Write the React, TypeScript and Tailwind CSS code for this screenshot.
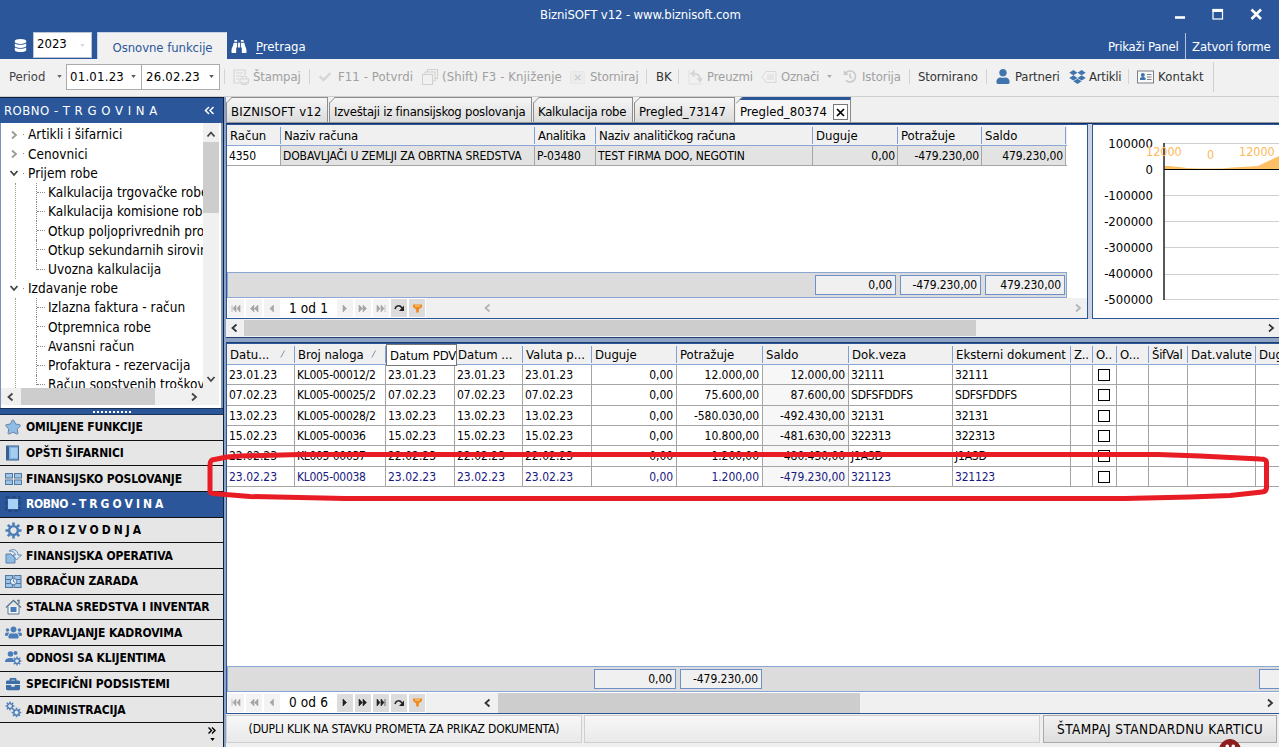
import React from 'react';
import clsx from 'clsx';
import { FaBinoculars, FaBriefcase, FaCheck, FaDatabase, FaDropbox, FaHistory, FaStar, FaUser, FaUsers } from 'react-icons/fa';

type Align = 'left' | 'right' | 'check';

interface Column {
  title: string;
  width: string;
  align?: Align;
  sorted?: boolean;
  boxed?: boolean;
  track?: string;
}

const Chevron: React.FC<{ dir: 'left' | 'right' | 'up' | 'down'; className?: string }> = ({ dir, className }) => {
  const d = {
    left: 'M6.5 1.5 L2.5 5 L6.5 8.5',
    right: 'M3 1.5 L7 5 L3 8.5',
    up: 'M1.5 6.5 L5 2.5 L8.5 6.5',
    down: 'M1.5 3 L5 7 L8.5 3',
  }[dir];
  return (
    <svg viewBox="0 0 10 10" className={clsx('h-[10px] w-[10px] shrink-0', className)} fill="none" stroke="currentColor" strokeWidth="1.8">
      <path d={d} />
    </svg>
  );
};

const Caret: React.FC<{ className?: string }> = ({ className }) => (
  <svg viewBox="0 0 6 4" className={clsx('h-[3px] w-[5px] shrink-0', className)} fill="currentColor">
    <path d="M0 0 H6 L3 4 Z" />
  </svg>
);

/* ---------- Title bar ---------- */

const TitleBar: React.FC = () => (
  <header className="relative flex h-[59px] flex-col bg-[#2b579a] text-white">
    <div className="flex h-[32px] items-center">
      <span className="ml-[540px] w-[602px] pb-[2px] text-[13px] tracking-[-0.12px] whitespace-nowrap">BizniSOFT v12 - www.biznisoft.com</span>
      <svg width="96" height="16" viewBox="0 0 96 16" className="ml-[33px]" fill="none" stroke="#fff">
        <path d="M0 9.5 H10" strokeWidth="2.6" />
        <rect x="38" y="1.5" width="9.5" height="9.5" strokeWidth="1.2" />
        <path d="M37.5 2.5 H48" strokeWidth="3" />
        <path d="M76.5 1.5 L86 11 M86 1.5 L76.5 11" strokeWidth="2.6" />
      </svg>
    </div>
    <div className="flex h-[27px] items-end text-[13px]">
      <FaDatabase className="mb-[7px] ml-[14px] h-[13px] w-[13px]" />
      <div className="mb-px ml-[6px] flex h-[26px] w-[59px] justify-between border border-[#b9c4d6] bg-white pt-[1px] pl-[3px] text-black">
        <span className="leading-[20px]">2023</span>
        <Caret className="mt-[10px] mr-[6px] text-[#d8d8d8]" />
      </div>
      <div className="ml-[5px] flex h-[27px] w-[130px] items-center justify-center border-t border-l border-[#c6d2e6] bg-[#f1f1f1] pt-[4px] tracking-[-0.06px] whitespace-nowrap text-[#2b579a]">
        Osnovne funkcije
      </div>
      <FaBinoculars className="mb-[5px] ml-[4px] h-[15px] w-[16px]" />
      <span className="mb-[2px] ml-[9px] w-[852px] leading-[20px]">
        <u className="underline-offset-2">P</u>retraga
      </span>
      <span className="mb-[2px] w-[77px] leading-[20px] tracking-[-0.2px] whitespace-nowrap">Prikaži Panel</span>
      <span className="flex h-[26px] items-center border-l border-[#b5c4dc] pt-[2px] pl-[6px] tracking-[-0.12px] whitespace-nowrap">
        Zatvori forme
      </span>
    </div>
  </header>
);

/* ---------- Toolbar ---------- */

const Sep: React.FC<{ className: string }> = ({ className }) => <span className={clsx('h-[15px] shrink-0 border-l border-[#d4d4d4]', className)} />;

const Tool: React.FC<{ className: string; children: React.ReactNode }> = ({ className, children }) => (
  <span className={clsx('shrink-0 whitespace-nowrap', className)}>{children}</span>
);

const PrintIcon = () => (
  <svg width="16" height="16" viewBox="0 0 16 16" fill="none" stroke="#d6d6d6" strokeWidth="1.2" className="mr-[4px] shrink-0">
    <path d="M6 14 H1 V1 H12 V6 M3 4 H10 M3 7 H9 M3 10 H6" />
    <path d="M7 10 H15.4 V14 H7 Z M9 10 V7.5 H13.5 V10 M9 13 V15.5 H13.5 V13" />
  </svg>
);

const CopiesIcon = () => (
  <svg width="16" height="16" viewBox="0 0 16 16" fill="#f1f1f1" stroke="#d0d0d0" className="mr-[4px] shrink-0">
    <rect x="5.5" y=".5" width="10" height="9" />
    <rect x="3" y="3" width="10" height="9" />
    <rect x=".5" y="5.5" width="10" height="10" />
  </svg>
);

const StornoIcon = () => (
  <svg width="16" height="16" viewBox="0 0 16 16" fill="none" className="mr-[4px] shrink-0">
    <rect x=".5" y="2.5" width="14" height="12" fill="#ececec" stroke="#e8e8e8" />
    <path d="M5 6 L10.5 11 M10.5 6 L5 11" stroke="#cdcdcd" strokeWidth="1.3" />
  </svg>
);

const FetchIcon = () => (
  <svg width="15" height="16" viewBox="0 0 15 16" fill="none" stroke="#d6d6d6" strokeWidth="2" className="mr-[4px] shrink-0">
    <path d="M1 1 V15 H15" strokeWidth="1" stroke="#e0e0e0" />
    <path d="M5 4.5 C9 4.5 12 6 12 10" />
    <path d="M2 4.5 L6.5 .5 V8.5 Z M8.5 9 H15 L12 14 Z" fill="#d6d6d6" stroke="none" />
  </svg>
);

const TagIcon = () => (
  <svg width="16" height="14" viewBox="0 0 16 14" fill="none" stroke="#d9d9d9" className="mr-[4px] shrink-0">
    <path d="M5 1.5 H15 V12.5 H5 L1 7 Z M6 5 H13 M6 7 H13 M6 9 H13" />
  </svg>
);

const ContactIcon = () => (
  <svg width="17" height="14" viewBox="0 0 17 14" className="mr-[4px] shrink-0">
    <rect x=".5" y="1" width="16" height="12" fill="#f8f8f8" stroke="#7b7f85" />
    <path d="M3 10 V8 L5 7 H7 L8.5 8 V10 Z" fill="#3f74ac" />
    <circle cx="5.8" cy="5" r="2" fill="#3f74ac" />
    <path d="M10 4.5 H14.5 M10 7 H14.5 M10 9.5 H14.5" stroke="#7b7f85" />
  </svg>
);

const DateBox: React.FC<{ value: string; className: string }> = ({ value, className }) => (
  <div className={clsx('flex h-[26px] shrink-0 items-center justify-between border border-[#ababab] bg-white text-black', className)}>
    <span className="tracking-[0.25px]">{value}</span>
    <Caret className="mr-[5px] text-[#555]" />
  </div>
);

const Toolbar: React.FC = () => (
  <div className="flex h-[38px] items-center border-b border-[#cfcfcf] bg-[#f1f1f1] pb-[2px] text-[13px] tracking-[-0.12px] text-[#333]">
    <Tool className="ml-[9px] w-[48px] tracking-normal text-[#444]">Period</Tool>
    <Caret className="mr-[4px] text-[#666]" />
    <DateBox value="01.01.23" className="w-[76px] pl-[3px]" />
    <DateBox value="26.02.23" className="w-[78px] border-l-0 pl-[4px]" />
    <Sep className="mr-[8px] ml-[4px]" />
    <PrintIcon />
    <Tool className="w-[56px] text-[#a0a0a0]">Štampaj</Tool>
    <Sep className="mr-[8px]" />
    <FaCheck className="mr-[6px] h-[12px] w-[14px] shrink-0 text-[#d6d6d6]" />
    <Tool className="w-[84px] tracking-[0.1px] text-[#a0a0a0]">F11 - Potvrdi</Tool>
    <CopiesIcon />
    <Tool className="w-[128px] tracking-[0.08px] text-[#a0a0a0]">(Shift) F3 - Knjiženje</Tool>
    <StornoIcon />
    <Tool className="w-[56px] text-[#a0a0a0]">Storniraj</Tool>
    <Sep className="mr-[9px]" />
    <Tool className="w-[22px]">BK</Tool>
    <Sep className="mr-[9px]" />
    <FetchIcon />
    <Tool className="w-[54px] text-[#a0a0a0]">Preuzmi</Tool>
    <TagIcon />
    <Tool className="w-[46px] tracking-[-0.25px] text-[#a0a0a0]">Označi</Tool>
    <Caret className="mr-[11px] text-[#aaa]" />
    <FaHistory className="mr-[5px] h-[13px] w-[14px] shrink-0 text-[#c9c9c9]" />
    <Tool className="w-[47px] text-[#a0a0a0]">Istorija</Tool>
    <Sep className="mr-[8px]" />
    <Tool className="w-[68px]">Stornirano</Tool>
    <Sep className="mr-[9px]" />
    <FaUser className="mr-[5px] h-[15px] w-[14px] shrink-0 text-[#3f74ac]" />
    <Tool className="w-[54px]">Partneri</Tool>
    <FaDropbox className="mr-[3px] h-[16px] w-[17px] shrink-0 text-[#3f74ac]" />
    <Tool className="w-[39px] tracking-[-0.25px]">Artikli</Tool>
    <Sep className="mr-[8px]" />
    <ContactIcon />
    <Tool className="w-[55px] tracking-[0.15px]">Kontakt</Tool>
    <span className="h-[30px] border-l border-[#d0d0d0]" />
  </div>
);

/* ---------- Left panel ---------- */

interface TreeNode {
  label: string;
  open?: boolean;
  children?: string[];
}

const tree: TreeNode[] = [
  { label: 'Artikli i šifarnici' },
  { label: 'Cenovnici' },
  {
    label: 'Prijem robe',
    open: true,
    children: ['Kalkulacija trgovačke robe', 'Kalkulacija komisione robe', 'Otkup poljoprivrednih pro', 'Otkup sekundarnih sirovina', 'Uvozna kalkulacija'],
  },
  {
    label: 'Izdavanje robe',
    open: true,
    children: ['Izlazna faktura - račun', 'Otpremnica robe', 'Avansni račun', 'Profaktura - rezervacija', 'Račun sopstvenih troškov'],
  },
];

const Tree: React.FC = () => (
  <div className="flex h-[285px] flex-col border-r-2 border-l border-[#7b93b8] bg-white">
    <div className="flex h-[265px]">
      <div className="w-[202px] shrink-0 overflow-hidden pt-[2px] text-[13.5px] tracking-[0.04px] whitespace-nowrap text-black">
        {tree.map((node) => (
          <div key={node.label}>
            <div className="flex h-[19.22px] items-center">
              <Chevron dir={node.open ? 'down' : 'right'} className={clsx('ml-[8px]', node.open ? 'text-[#444]' : 'text-[#9a9a9a]')} />
              <span className="mr-[4px] ml-[4px] w-px border-t border-[#888]" />
              <span>{node.label}</span>
            </div>
            {node.children && (
              <div className="ml-[14px] border-l border-dotted border-[#999] pl-[20px]">
                {node.children.map((child, i) => (
                  <div key={child} className="flex h-[19.22px] items-center">
                    <span className={clsx('shrink-0 self-start border-l border-dotted border-[#888]', i === 4 ? 'h-[10px]' : 'h-full')} />
                    <span className="mr-[3px] w-[8px] shrink-0 border-t border-dotted border-[#888]" />
                    <span className="shrink-0">{child}</span>
                  </div>
                ))}
              </div>
            )}
          </div>
        ))}
      </div>
      <div className="flex w-[16px] flex-col items-center bg-[#f0f0f0]">
        <Chevron dir="up" className="mt-[7px] mb-[2px] text-[#444]" />
        <div className="h-[71px] w-full bg-[#cdcdcd]" />
        <Chevron dir="down" className="mt-auto mb-[4px] text-[#444]" />
      </div>
    </div>
    <div className="flex h-[17px] w-[218px] items-center bg-[#f0f0f0]">
      <Chevron dir="left" className="mx-[5px] text-[#444]" />
      <div className="h-full w-[134px] bg-[#cdcdcd]" />
      <Chevron dir="right" className="ml-[34px] text-[#444]" />
    </div>
  </div>
);

/* ring with eight teeth, drawn around its own centre */
const Gear: React.FC<{ x: number; y: number; scale: number }> = ({ x, y, scale }) => (
  <g transform={`translate(${x} ${y}) scale(${scale})`} fill="none" stroke="#4a7db8">
    <circle r="4.4" strokeWidth="2.4" />
    <path d="M0 -8 V-5 M0 5 V8 M-8 0 H-5 M5 0 H8 M-5.7 -5.7 L-3.6 -3.6 M3.6 3.6 L5.7 5.7 M5.7 -5.7 L3.6 -3.6 M-3.6 3.6 L-5.7 5.7" strokeWidth="2.6" />
  </g>
);

const NavIcon: React.FC<{ kind: string }> = ({ kind }) => {
  switch (kind) {
    case 'star':
      return <FaStar className="h-[16px] w-[16px] overflow-visible fill-[#8fbde6] stroke-[#6583a8] [stroke-width:36px]" />;
    case 'gear':
      return (
        <svg width="17" height="17" viewBox="0 0 17 17">
          <Gear x={8.5} y={8.5} scale={1} />
        </svg>
      );
    case 'users':
      return <FaUsers className="h-[17px] w-[17px] text-[#4a7db8]" />;
    case 'client':
      return (
        <svg width="17" height="16" viewBox="0 0 17 16" fill="#4a7db8">
          <circle cx="5.5" cy="4" r="2.8" />
          <circle cx="10.5" cy="3" r="2" />
          <path d="M0 12 C0 9 2 8 5.5 8 C7 8 8 8.3 8.5 9 V12 Z" />
          <Gear x={12} y={11} scale={0.55} />
        </svg>
      );
    case 'case':
      return <FaBriefcase className="h-[14px] w-[16px] text-[#3d6ea5]" />;
    case 'gears':
      return (
        <svg width="17" height="17" viewBox="0 0 17 17">
          <Gear x={5} y={5} scale={0.55} />
          <Gear x={11.5} y={11.5} scale={0.6} />
        </svg>
      );
    case 'book':
      return (
        <svg width="16" height="16" viewBox="0 0 16 16">
          <rect x="1.5" y="1" width="12" height="14" fill="#7db2e2" stroke="#3c5f8a" />
          <rect x="2" y="1.5" width="2" height="13" fill="#3c5f8a" />
          <rect x="5.5" y="3" width="7" height="10" fill="#a4cdf0" />
        </svg>
      );
    case 'panes':
      return (
        <svg width="17" height="14" viewBox="0 0 17 14" fill="#9cc4e8" stroke="#54779f">
          <rect x=".5" y="1.5" width="7" height="4.5" />
          <rect x="9.5" y="1.5" width="7" height="4.5" />
          <rect x=".5" y="8" width="7" height="4.5" />
          <rect x="9.5" y="8" width="7" height="4.5" />
        </svg>
      );
    case 'select':
      return (
        <svg width="16" height="16" viewBox="0 0 16 16">
          <rect x="1" y="1" width="14" height="14" fill="none" stroke="#1b3a68" strokeDasharray="4 2" />
          <rect x="3" y="3" width="10" height="10" fill="#a9d1f5" />
        </svg>
      );
    case 'transfer':
      return (
        <svg width="17" height="16" viewBox="0 0 17 16">
          <path d="M1 6 H6 L10 10 V15 H1 Z" fill="#8fbbe3" stroke="#5a7fa8" />
          <path d="M4 3 C8 0 13 2 13 7 H16.5 L11.5 12 L8 7 H10.5 C10 4 7 3 4 3 Z" fill="#d9eafa" stroke="#5a7fa8" strokeWidth=".9" />
        </svg>
      );
    case 'payroll':
      return (
        <svg width="17" height="15" viewBox="0 0 17 15" stroke="#54779f">
          <rect x=".5" y="1.5" width="7" height="12" fill="#9cc4e8" />
          <rect x="9" y="1.5" width="7" height="12" fill="#9cc4e8" />
          <path d="M1 5.5 H7 M1 9.5 H7 M10 5.5 H16 M10 9.5 H16" />
          <circle cx="8.5" cy="7.5" r="3.2" fill="#e6f0fa" />
          <path d="M8.5 5.5 V7.5 L10 8.5" fill="none" />
        </svg>
      );
    default:
      return (
        <svg width="17" height="16" viewBox="0 0 17 16" stroke="#5c7590">
          <path d="M3 7.5 V15 H14 V7.5" fill="#f6f8fa" />
          <path d="M1 8.5 L8.5 1.5 L16 8.5 M12 1.5 H14 V5" fill="none" strokeWidth="1.3" />
          <rect x="5.5" y="8" width="6" height="5" fill="#4a7db8" stroke="none" />
        </svg>
      );
  }
};

const sections = [
  { icon: 'star', label: 'OMILJENE FUNKCIJE' },
  { icon: 'book', label: 'OPŠTI ŠIFARNICI' },
  { icon: 'panes', label: 'FINANSIJSKO POSLOVANJE' },
  { icon: 'select', label: 'ROBNO - T R G O V I N A', active: true, spaced: true },
  { icon: 'gear', label: 'P R O I Z V O D N J A', spaced: true },
  { icon: 'transfer', label: 'FINANSIJSKA OPERATIVA' },
  { icon: 'payroll', label: 'OBRAČUN ZARADA' },
  { icon: 'house', label: 'STALNA SREDSTVA I INVENTAR' },
  { icon: 'users', label: 'UPRAVLJANJE KADROVIMA' },
  { icon: 'client', label: 'ODNOSI SA KLIJENTIMA' },
  { icon: 'case', label: 'SPECIFIČNI PODSISTEMI' },
  { icon: 'gears', label: 'ADMINISTRACIJA' },
];

const Sidebar: React.FC = () => (
  <aside className="flex h-[650px] w-[224px] shrink-0 flex-col border-t border-r border-[#10213f]">
    <div className="flex h-[25px] shrink-0 items-center justify-between bg-[#2b579a] pr-[8px] pl-[4px] text-white">
      <span className="text-[13px] tracking-[0.48px] whitespace-nowrap">ROBNO - T R G O V I N A</span>
      <svg width="11" height="9" viewBox="0 0 11 9" fill="none" stroke="#fff" strokeWidth="1.5">
        <path d="M5 1 L1.5 4.5 L5 8 M9.5 1 L6 4.5 L9.5 8" />
      </svg>
    </div>
    <Tree />
    <div className="flex h-[7px] shrink-0 items-center justify-center border-t border-b border-[#1c3358] bg-[#2b579a]">
      <span className="w-[38px] border-t-2 border-dotted border-white" />
    </div>
    <nav className="flex h-[308px] flex-col">
      {sections.map((s) => (
        <div
          key={s.label}
          className={clsx(
            'flex flex-1 items-center border-b border-[#111] pl-[4px] text-[12px] font-bold whitespace-nowrap',
            s.active ? 'bg-[#2b579a] text-white' : 'bg-[#e6e6e6] text-black'
          )}
        >
          <span className="mr-[4px] flex w-[18px] justify-center">
            <NavIcon kind={s.icon} />
          </span>
          <span className={s.spaced ? 'tracking-[-0.38px]' : 'tracking-[-0.12px]'}>{s.label}</span>
        </div>
      ))}
    </nav>
    <div className="flex flex-1 flex-col items-end bg-[#e6e6e6] pt-[4px] pr-[7px] text-black">
      <svg width="8" height="7" viewBox="0 0 8 7" fill="none" stroke="currentColor" strokeWidth="1.4">
        <path d="M.5 .5 L3.5 3.5 L.5 6.5 M4 .5 L7 3.5 L4 6.5" />
      </svg>
      <Caret className="mt-[4px] mr-[1px]" />
    </div>
  </aside>
);

/* ---------- Grids ---------- */

const HeadCell: React.FC<{ col: Column }> = ({ col }) => (
  <div
    className={clsx(
      'flex shrink-0 items-center whitespace-nowrap',
      col.boxed
        ? 'z-10 -mr-[2px] h-[22px] w-[71px] self-start border border-[#777] bg-white pt-px pl-[3px]'
        : ['h-[17px] border-r border-[#7f9fd8] pt-[2px] pl-[3px]', col.width]
    )}
  >
    <span className={clsx('text-[13px]', col.track)}>{col.title}</span>
    {col.sorted && (
      <svg width="6" height="8" viewBox="0 0 6 8" className="mr-[8px] mb-[2px] ml-auto shrink-0" stroke="#7f93b5" fill="none">
        <path d="M.8 7.5 L4.5 .5" />
      </svg>
    )}
  </div>
);

const FooterSum: React.FC<{ value: string; className: string }> = ({ value, className }) => (
  <div className={clsx('h-[20px] shrink-0 border border-[#6f8fca] bg-[#f0f0f0] pr-[3px] text-right leading-[19px]', className)}>{value}</div>
);

const pagerPaths = {
  first: 'M1 1 V8 M5 1 L2 4.5 L5 8 Z M9 1 L6 4.5 L9 8 Z',
  rewind: 'M5 1 L1.5 4.5 L5 8 Z M9 1 L5.5 4.5 L9 8 Z',
  prev: 'M6.5 1 L3 4.5 L6.5 8 Z',
  next: 'M3 1 L6.5 4.5 L3 8 Z',
  forward: 'M1 1 L4.5 4.5 L1 8 Z M5 1 L8.5 4.5 L5 8 Z',
  last: 'M1 1 L4 4.5 L1 8 Z M5 1 L8 4.5 L5 8 Z M9 1 V8',
};

const PagerButton: React.FC<{ kind: keyof typeof pagerPaths; active?: boolean }> = ({ kind, active }) => (
  <span className={clsx('flex h-[18px] w-[16px] shrink-0 items-center justify-center', active ? 'bg-[#dcdcdc] text-[#222]' : 'bg-[#f3f3f3] text-[#a5a5a5]')}>
    <svg width="10" height="9" viewBox="0 0 10 9" fill="currentColor" stroke="currentColor" strokeWidth=".6">
      <path d={pagerPaths[kind]} />
    </svg>
  </span>
);

const Pager: React.FC<{ text: string; active?: boolean }> = ({ text, active }) => (
  <div className="flex items-center gap-[2px] bg-white pl-[1px]">
    <PagerButton kind="first" />
    <PagerButton kind="rewind" />
    <PagerButton kind="prev" />
    <span className="w-[53px] text-center text-[13.5px] tracking-[0.15px] whitespace-nowrap">{text}</span>
    <PagerButton kind="next" active={active} />
    <PagerButton kind="forward" active={active} />
    <PagerButton kind="last" active={active} />
    <span className="flex h-[18px] w-[16px] items-center justify-center bg-[#dcdcdc]">
      <svg width="11" height="8" viewBox="0 0 11 8" fill="none" stroke="#222" strokeWidth="1.5">
        <path d="M1 5 C2 1 6 1 8 4" />
        <path d="M10 1.5 V7 H5 Z" fill="#222" stroke="none" />
      </svg>
    </span>
    <span className="mr-px flex h-[18px] w-[16px] items-center justify-center bg-[#dcdcdc]">
      <svg width="9" height="9" viewBox="0 0 9 9">
        <path d="M0 .5 H9 V3 L5.8 5.5 V8.5 H3.2 V5.5 L0 3 Z" fill="#ee8a1d" />
        <path d="M2 2 H7" stroke="#ffd9a0" />
      </svg>
    </span>
  </div>
);

const accountColumns: Column[] = [
  { title: 'Račun', width: 'w-[54px]' },
  { title: 'Naziv računa', width: 'w-[254px]', track: 'tracking-[-0.2px]' },
  { title: 'Analitika', width: 'w-[61px]', track: 'tracking-[-0.35px]' },
  { title: 'Naziv analitičkog računa', width: 'w-[217px]', track: 'tracking-[-0.3px]' },
  { title: 'Duguje', width: 'w-[85px]', align: 'right' },
  { title: 'Potražuje', width: 'w-[84px]', align: 'right' },
  { title: 'Saldo', width: 'w-[84px]', align: 'right' },
];
const accountRow = ['4350', 'DOBAVLJAČI U ZEMLJI ZA OBRTNA SREDSTVA', 'P-03480', 'TEST FIRMA DOO, NEGOTIN', '0,00', '-479.230,00', '479.230,00'];

const AccountGrid: React.FC = () => (
  <section className="flex w-[862px] flex-col border border-[#2b579a] bg-white text-[12px] tracking-[-0.1px] text-black">
    <div className="flex h-[21px] w-[840px] items-center border-b border-[#8aa6d4] bg-[#f0f0f0] tracking-normal">
      {accountColumns.map((c) => (
        <HeadCell key={c.title} col={c} />
      ))}
    </div>
    <div className="flex h-[20px] w-[840px] border-b border-[#a5a5a5]">
      {accountColumns.map((c, i) => (
        <div
          key={c.title}
          className={clsx(
            'overflow-hidden border-r border-[#a5a5a5] px-[2px] leading-[20px] whitespace-nowrap',
            c.width,
            i === 0 ? 'bg-white' : 'bg-[#e3e3e3]',
            c.align === 'right' && 'text-right'
          )}
        >
          {accountRow[i]}
        </div>
      ))}
    </div>
    <div className="h-[106px]" />
    <div className="flex h-[26px] w-[840px] items-center justify-end gap-[4px] border border-[#8aa6d4] bg-[#dcdcdc] pr-[1px]">
      <FooterSum value="0,00" className="w-[81px]" />
      <FooterSum value="-479.230,00" className="w-[81px]" />
      <FooterSum value="479.230,00" className="w-[80px]" />
    </div>
    <div className="flex h-[20px] items-center">
      <Pager text="1 od 1" />
      <div className="flex h-full flex-1 items-center justify-between bg-[#f0f0f0] pr-[4px] pl-[57px] text-[#b5b5b5]">
        <Chevron dir="left" />
        <Chevron dir="right" />
      </div>
    </div>
  </section>
);

const axis = ['100000', '0', '-100000', '-200000', '-300000', '-400000', '-500000'];

const BalanceChart: React.FC = () => (
  <section className="flex w-[187px] border border-r-0 border-[#2b579a] bg-white text-[13px] text-black">
    <div className="flex w-[60px] flex-col pt-[6px]">
      {axis.map((v) => (
        <span key={v} className="h-[26px] text-right leading-[26px]">
          {v}
        </span>
      ))}
    </div>
    <svg width="126" height="193" viewBox="0 0 126 193" className="overflow-visible" fill="none">
      {[18.5, 70.5, 96.5, 122.5, 149.5, 174.5].map((y) => (
        <path key={y} d={`M11 ${y} H126`} stroke="#d0d0d0" />
      ))}
      <path d="M11 41 C23 41 29 43 43 43.5 H69 C83 42 95 42 105 41 L126 31 V44 H11 Z" fill="#fdbf63" />
      <path d="M11 18 V175" stroke="#222" strokeWidth="1.5" />
      <path d="M11 44.5 H126" stroke="#000" />
      <g fill="#fdb95a" fontSize="12.5">
        <text x="-7" y="31">12000</text>
        <text x="54" y="34">0</text>
        <text x="86" y="31">12000</text>
      </g>
    </svg>
  </section>
);

const itemColumns: Column[] = [
  { title: 'Datu...', width: 'w-[68px]', sorted: true },
  { title: 'Broj naloga', width: 'w-[91px]', sorted: true, track: 'tracking-[-0.05px]' },
  { title: 'Datum PDV', width: 'w-[69px]', boxed: true, track: 'tracking-[-0.1px]' },
  { title: 'Datum ...', width: 'w-[68px]' },
  { title: 'Valuta p...', width: 'w-[69px]' },
  { title: 'Duguje', width: 'w-[85px]', align: 'right' },
  { title: 'Potražuje', width: 'w-[86px]', align: 'right' },
  { title: 'Saldo', width: 'w-[86px]', align: 'right' },
  { title: 'Dok.veza', width: 'w-[104px]' },
  { title: 'Eksterni dokument', width: 'w-[118px]' },
  { title: 'Z..', width: 'w-[22px]', track: 'tracking-[-0.2px]' },
  { title: 'O..', width: 'w-[24px]', align: 'check' },
  { title: 'O...', width: 'w-[32px]' },
  { title: 'ŠifVal', width: 'w-[39px]', track: 'tracking-[-0.3px]' },
  { title: 'Dat.valute', width: 'w-[68px]' },
  { title: 'Duguje', width: 'w-[69px]' },
];

const items = [
  ['23.01.23', 'KL005-00012/2', '12.000,00', '12.000,00', '32111'],
  ['07.02.23', 'KL005-00025/2', '75.600,00', '87.600,00', 'SDFSFDDFS'],
  ['13.02.23', 'KL005-00028/2', '-580.030,00', '-492.430,00', '32131'],
  ['15.02.23', 'KL005-00036', '10.800,00', '-481.630,00', '322313'],
  ['22.02.23', 'KL005-00037', '1.200,00', '-480.430,00', 'J1ASD'],
  ['23.02.23', 'KL005-00038', '1.200,00', '-479.230,00', '321123'],
];

const ItemGrid: React.FC = () => (
  <section className="flex h-[371px] shrink-0 flex-col overflow-hidden border border-r-0 border-[#2b579a] bg-white text-[12px] text-black">
    <div className="flex h-[21px] shrink-0 items-center border-b border-[#8aa6d4] bg-[#f0f0f0]">
      {itemColumns.map((c, i) => (
        <HeadCell key={i} col={c} />
      ))}
    </div>
    <div className="flex h-[122px] shrink-0 flex-col">
      {items.map(([date, order, credit, balance, ref], r) => {
        const cells = [date, order, date, date, date, '0,00', credit, balance, ref, ref, '', '', '', '', '', ''];
        return (
          <div key={order} className={clsx('flex min-h-0 flex-1 border-b border-[#a5a5a5] leading-[14px]', r === 5 && 'text-[#191980]')}>
            {cells.map((value, i) => (
              <div
                key={i}
                className={clsx(
                  'flex shrink-0 items-center border-r border-[#a5a5a5] pt-px pr-[3px] pl-[2px] whitespace-nowrap',
                  itemColumns[i].width,
                  i === 1 && 'tracking-[-0.3px]',
                  (i === 8 || i === 9) && 'tracking-[-0.2px]',
                  i === 7 && 'bg-[#f7f7f7]',
                  itemColumns[i].align === 'right' && 'justify-end tracking-[-0.06px]',
                  itemColumns[i].align === 'check' && 'justify-center'
                )}
              >
                {itemColumns[i].align === 'check' ? <span className="h-[12px] w-[12px] border border-black bg-white" /> : value}
              </div>
            ))}
          </div>
        );
      })}
    </div>
    <div className="flex-1" />
    <div className="flex h-[26px] shrink-0 items-center border border-r-0 border-[#8aa6d4] bg-[#dcdcdc] pl-[366px] tracking-[-0.06px]">
      <FooterSum value="0,00" className="mr-[4px] w-[82px]" />
      <FooterSum value="-479.230,00" className="mr-[497px] w-[82px]" />
      <FooterSum value="" className="w-[81px]" />
    </div>
    <div className="flex h-[21px] shrink-0 items-center">
      <Pager text="0 od 6" active />
      <div className="flex h-[20px] flex-1 items-center bg-[#f0f0f0] pl-[57px] text-[#333]">
        <Chevron dir="left" />
        <div className="mr-auto ml-[5px] h-full w-[362px] bg-[#cdcdcd]" />
        <Chevron dir="right" className="mr-[4px]" />
      </div>
    </div>
  </section>
);

/* ---------- Document tabs ---------- */

const tabs = [
  { label: 'BIZNISOFT v12', width: 'w-[102px]', track: 'tracking-[0.25px]' },
  { label: 'Izveštaji iz finansijskog poslovanja', width: 'w-[203px]', track: 'tracking-[-0.25px]' },
  { label: 'Kalkulacija robe', width: 'w-[100px]', track: 'tracking-[-0.25px]' },
  { label: 'Pregled_73147', width: 'w-[101px]', track: 'tracking-normal' },
];

const TabBar: React.FC = () => (
  <div className="flex h-[26px] shrink-0 gap-[1px] border-b border-[#999] bg-[#f0f0f0] text-[13px] whitespace-nowrap text-black">
    {tabs.map((t) => (
      <div
        key={t.label}
        className={clsx('relative flex items-center border-t border-r border-l border-[#8c8c8c] bg-linear-to-b from-[#f6f6f6] to-[#dcdcdc] pt-[4px] pl-[4px]', t.width, t.track)}
      >
        <svg width="7" height="7" viewBox="0 0 7 7" className="absolute -top-px -left-px">
          <path d="M0 0 H6 L0 6 Z" fill="#f0f0f0" />
          <path d="M0 6.5 L6.5 0" stroke="#8c8c8c" />
        </svg>
        {t.label}
      </div>
    ))}
    <div className="relative flex w-[115px] items-center border-t-[3px] border-r border-t-[#2b579a] border-r-[#8c8c8c] bg-[#f6f6f6] pt-[2px] pl-[4px]">
      <svg width="7" height="7" viewBox="0 0 7 7" className="absolute -top-[3px] left-0">
        <path d="M0 0 H6 L0 6 Z" fill="#f0f0f0" />
        <path d="M0 6.5 L6.5 0" stroke="#8c8c8c" />
      </svg>
      Pregled_80374
      <span className="mr-[2px] ml-auto flex h-[16px] w-[15px] items-center justify-center border border-[#777] bg-white">
        <svg width="9" height="9" viewBox="0 0 9 9" stroke="#000" strokeWidth="1.7">
          <path d="M1 1 L8 8 M8 1 L1 8" />
        </svg>
      </span>
    </div>
  </div>
);

const StatusBar: React.FC = () => (
  <footer className="flex flex-1 gap-[2px] bg-[#efefef] pt-px pb-[4px] whitespace-nowrap text-black">
    <div className="flex w-[356px] items-center justify-center border border-[#cfcfcf] bg-linear-to-b from-[#f7f7f7] to-[#e9e9e9] text-[12px] tracking-[-0.15px]">
      (DUPLI KLIK NA STAVKU PROMETA ZA PRIKAZ DOKUMENTA)
    </div>
    <div className="w-[456px] border border-[#cfcfcf] bg-linear-to-b from-[#f7f7f7] to-[#e9e9e9]" />
    <div className="ml-[1px] flex w-[234px] items-center justify-center border border-[#a9a9a9] bg-linear-to-b from-[#f2f2f2] to-[#dedede] text-[13.5px] tracking-[0.4px]">
      ŠTAMPAJ STANDARDNU KARTICU
    </div>
  </footer>
);

export default function App() {
  return (
    <div className="relative flex h-[747px] w-[1279px] flex-col overflow-hidden bg-[#f1f1f1] font-['DejaVu_Sans_Condensed','DejaVu_Sans',sans-serif] [font-stretch:condensed]">
      <TitleBar />
      <Toolbar />
      <div className="flex flex-1">
        <Sidebar />
        <main className="flex w-[1055px] flex-col border-l-2 border-[#8ea3c4]">
          <TabBar />
          <div className="flex h-[196px] shrink-0 gap-[4px] border-t border-[#12306a] bg-[#c9d3e3]">
            <AccountGrid />
            <BalanceChart />
          </div>
          <div className="flex h-[18px] shrink-0 items-center bg-[#f0f0f0] text-[#333]">
            <Chevron dir="left" className="mx-[4px]" />
            <div className="h-[16px] w-[732px] bg-[#cdcdcd]" />
            <Chevron dir="right" className="mr-[3px] ml-auto" />
          </div>
          <div className="h-[6px] shrink-0 border-y border-[#1f3f72] bg-[#8ea3c4]" />
          <ItemGrid />
          <StatusBar />
        </main>
      </div>

      {/* hand drawn marker around the last entry */}
      <svg width="1279" height="747" viewBox="0 0 1279 747" className="pointer-events-none absolute inset-0 z-20" fill="none" stroke="#e81c24" strokeLinejoin="round" strokeLinecap="round">
        <path
          d="M227 457 L212 460 Q210 461 210 466 V491 Q210 493 213 493.5 L250 496.5 L345 498.5 H1125 L1190 497 L1230 495.5 L1262 492 Q1266 492 1266.5 488 V462 Q1266 459 1260 459 L1200 456 L1158 454.5 H300 L240 456 Z"
          strokeWidth="5"
        />
        <circle cx="1230" cy="750" r="10.5" fill="#8e1d1d" stroke="#8e1d1d" strokeWidth="1" />
        <path d="M1227 746 H1227.5 M1233 746 H1233.5" stroke="#fff" strokeWidth="3" />
      </svg>
    </div>
  );
}
